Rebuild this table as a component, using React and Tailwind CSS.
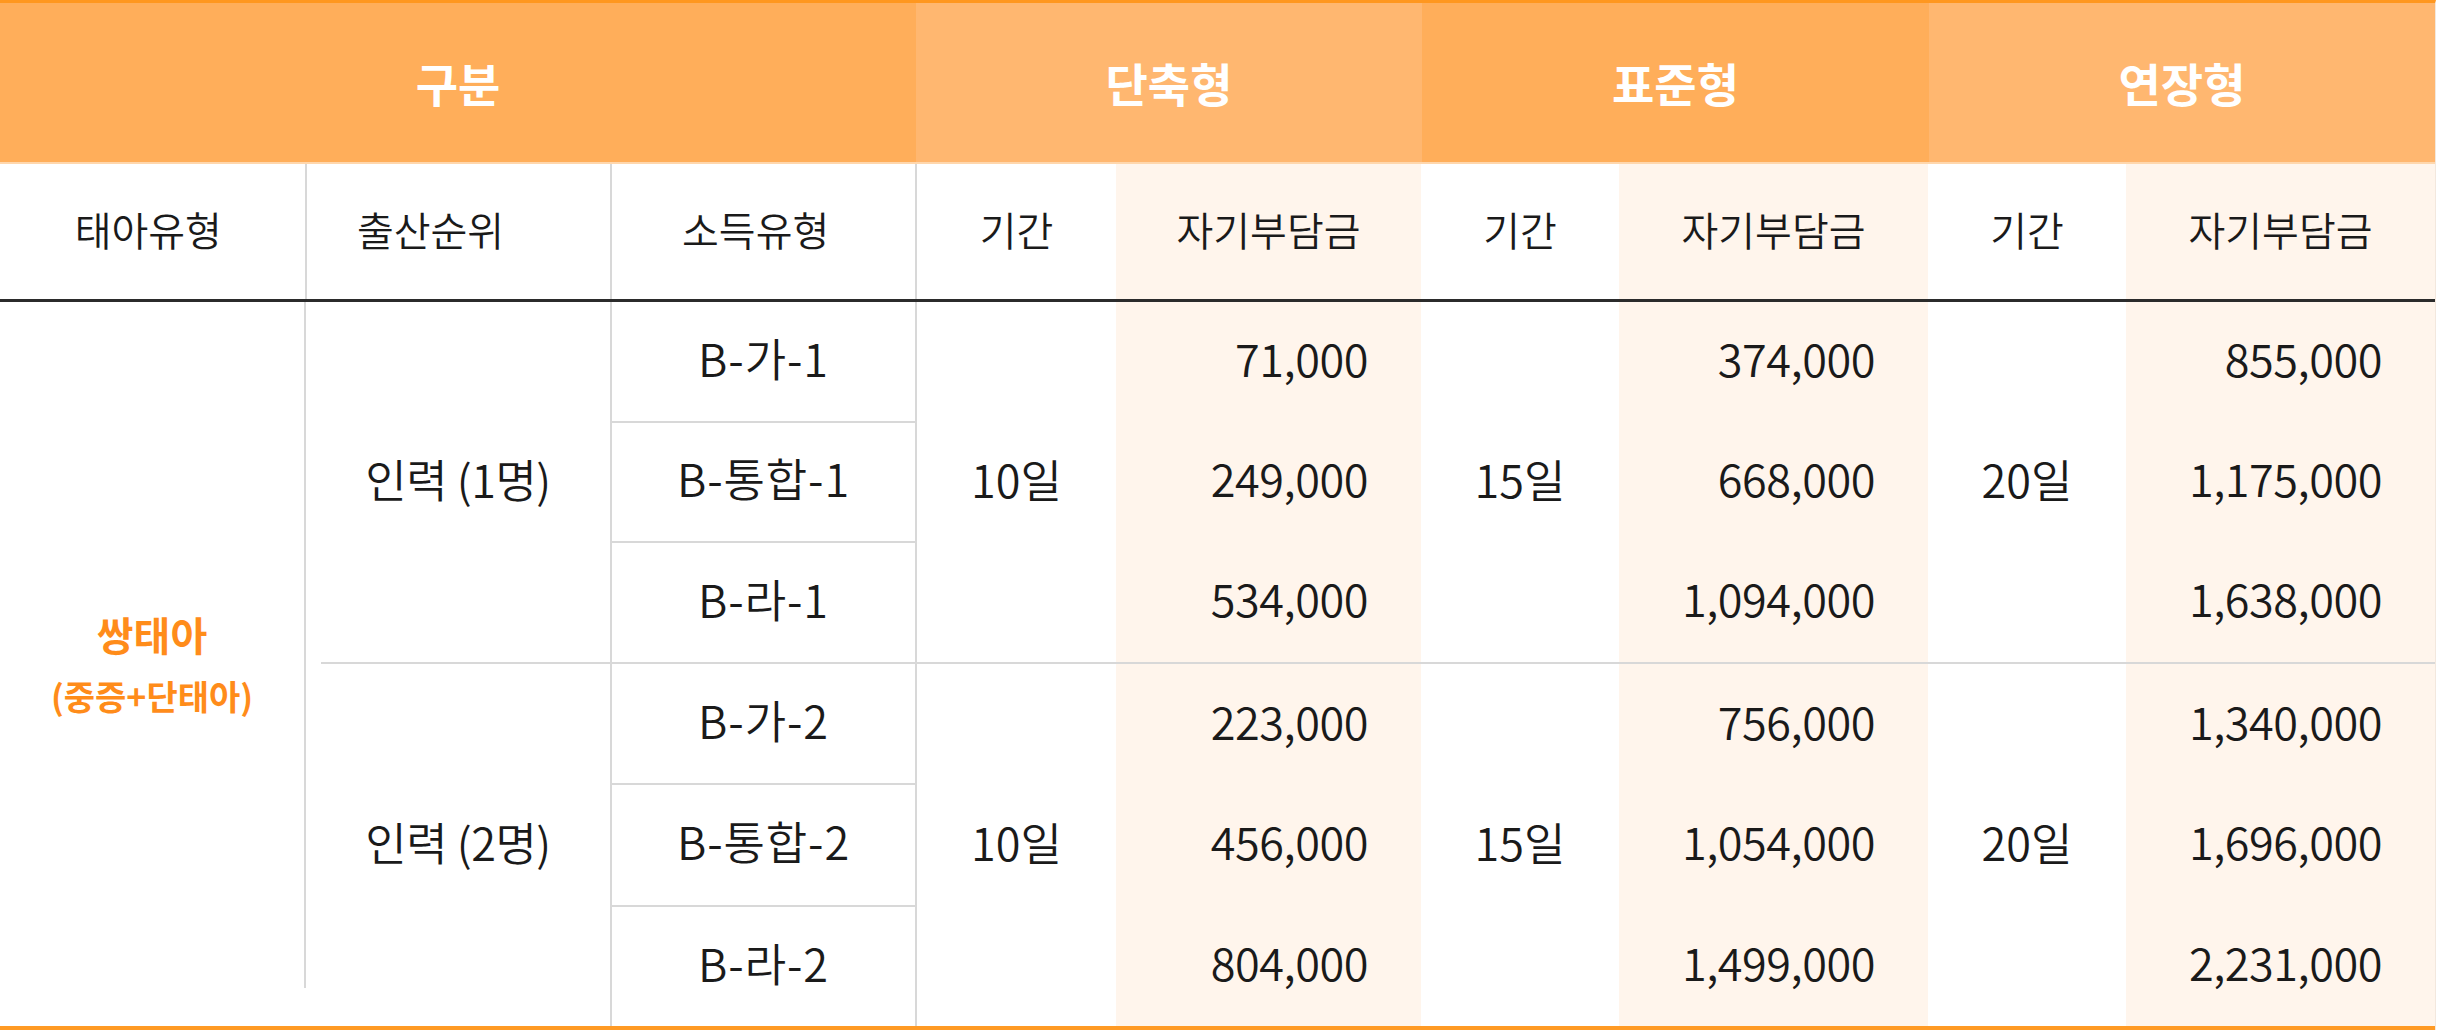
import React from "react";

const groups = [
  {
    label: "인력 (1명)",
    types: ["B-가-1", "B-통합-1", "B-라-1"],
    plans: [
      { days: "10일", values: ["71,000", "249,000", "534,000"] },
      { days: "15일", values: ["374,000", "668,000", "1,094,000"] },
      { days: "20일", values: ["855,000", "1,175,000", "1,638,000"] },
    ],
  },
  {
    label: "인력 (2명)",
    types: ["B-가-2", "B-통합-2", "B-라-2"],
    plans: [
      { days: "10일", values: ["223,000", "456,000", "804,000"] },
      { days: "15일", values: ["756,000", "1,054,000", "1,499,000"] },
      { days: "20일", values: ["1,340,000", "1,696,000", "2,231,000"] },
    ],
  },
];

// widths of the plan columns: [기간, 자기부담금]
const planWidths = [
  ["w-[199px]", "w-[305px]"],
  ["w-[198px]", "w-[309px]"],
  ["w-[198px]", "w-[309px]"],
];

const Group = ({ group, last }) => {
  return (
    <div className="flex flex-col h-[364px]">
      <div className="flex flex-1">
        <div className="w-[306px] border-r-2 border-[#d8d8d8] flex items-center justify-center pb-[6px] tracking-[-0.01em]">
          {group.label}
        </div>
        <div className="w-[305px] border-r-2 border-[#d8d8d8] flex flex-col">
          {group.types.map((t, i) => (
            <div
              key={t}
              className={
                "flex-1 flex items-center justify-center pb-[8px] tracking-[0.02em]" +
                (i < 2 ? " border-b-2 border-[#d8d8d8]" : "")
              }
            >
              {t}
            </div>
          ))}
        </div>
        {group.plans.map((p, k) => (
          <div key={p.days} className="flex">
            <div className={planWidths[k][0] + " flex items-center justify-center pb-[6px]"}>{p.days}</div>
            <div className={planWidths[k][1] + " bg-[#fff5ec] flex flex-col pr-[53px] text-[45px] tracking-[-0.01em]"}>
              {p.values.map((v) => (
                <div key={v} className="flex-1 flex items-center justify-end pb-[8px]">
                  {v}
                </div>
              ))}
            </div>
          </div>
        ))}
      </div>
      {!last && (
        <div className="flex">
          <div className="w-[17px] border-r-2 border-[#d8d8d8]"></div>
          <div className="flex-1 h-[2px] bg-[#d8d8d8]"></div>
        </div>
      )}
    </div>
  );
};

const App = () => {
  return (
    <div className="w-[2440px] h-[1034px] bg-white font-['Noto_Sans_CJK_KR',sans-serif] text-[#1a1a1a] font-[350]">
      <div className="w-[2436px] border-t-[3px] border-[#ff971f] border-r border-r-[#f3e8de]">
        <div className="flex h-[159px] text-white font-bold text-[46px]">
          <div className="w-[916px] bg-[#ffae5a] flex items-center justify-center">구분</div>
          <div className="w-[506px] bg-[#ffb770] flex items-center justify-center">단축형</div>
          <div className="w-[507px] bg-[#ffae5a] flex items-center justify-center">표준형</div>
          <div className="flex-1 bg-[#ffb770] flex items-center justify-center">연장형</div>
        </div>
        <div className="h-[2px] bg-[#ffd7ad]"></div>

        <div className="flex h-[135px] text-[40px]">
          <div className="w-[307px] border-r-2 border-[#d8d8d8] flex items-center justify-center pr-[8px] pb-[6px]">태아유형</div>
          <div className="w-[306px] border-r-2 border-[#d8d8d8] flex items-center justify-center pr-[56px] pb-[6px]">출산순위</div>
          <div className="w-[305px] border-r-2 border-[#d8d8d8] flex items-center justify-center pr-[16px] pb-[6px]">소득유형</div>
          {planWidths.map((w, k) => (
            <div key={k} className="flex">
              <div className={w[0] + " flex items-center justify-center pb-[6px]"}>기간</div>
              <div className={w[1] + " bg-[#fff5ec] flex items-center justify-center pb-[6px]"}>자기부담금</div>
            </div>
          ))}
        </div>
        <div className="h-[3px] bg-[#2b2b2b]"></div>

        <div className="flex h-[728px] text-[45px] border-b-4 border-[#ff9a24]">
          <div className="w-[307px] flex">
            <div className="flex-1 flex flex-col items-center justify-center text-[#ff8c1a] font-bold">
              <div className="text-[40px] leading-[64px]">쌍태아</div>
              <div className="text-[34px] leading-[60px]">(중증+단태아)</div>
            </div>
            <div className="w-[2px] flex flex-col">
              <div className="h-[686px] bg-[#d8d8d8]"></div>
            </div>
          </div>
          <div className="flex-1 flex flex-col">
            {groups.map((g, i) => (
              <Group key={g.label} group={g} last={i === groups.length - 1} />
            ))}
          </div>
        </div>
      </div>
    </div>
  );
};

export default App;
